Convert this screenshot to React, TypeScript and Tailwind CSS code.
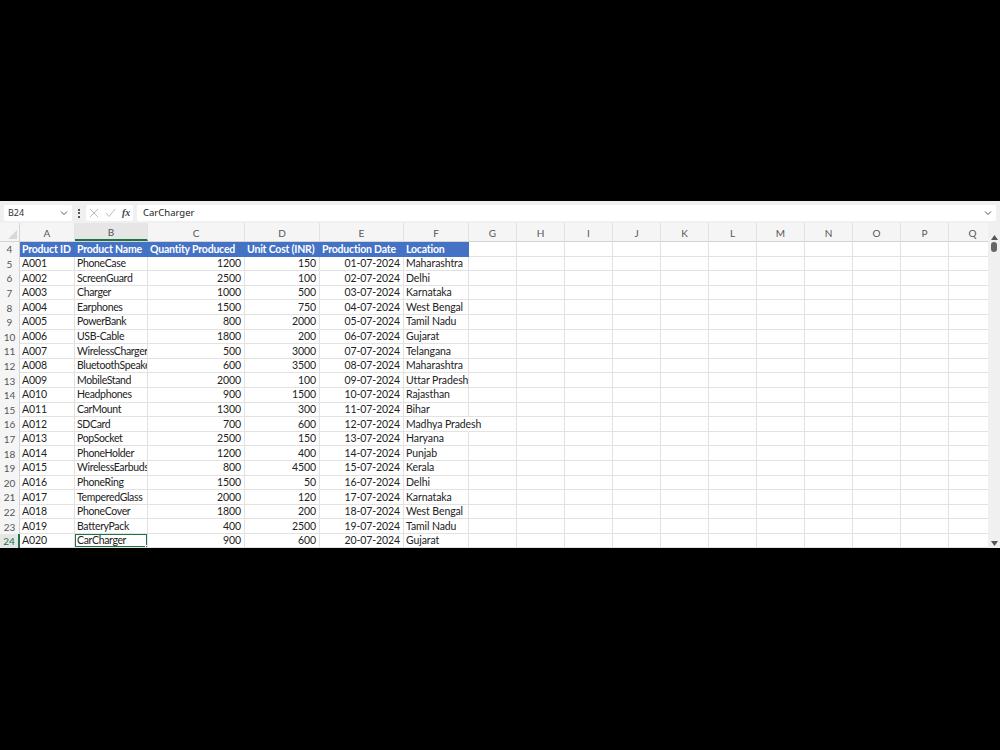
import React from 'react';

const cols = [
    { key: 'A', w: 55 },
    { key: 'B', w: 73 },
    { key: 'C', w: 97 },
    { key: 'D', w: 75 },
    { key: 'E', w: 84 },
    { key: 'F', w: 65 },
    { key: 'G', w: 48 },
    { key: 'H', w: 48 },
    { key: 'I', w: 48 },
    { key: 'J', w: 48 },
    { key: 'K', w: 48 },
    { key: 'L', w: 48 },
    { key: 'M', w: 48 },
    { key: 'N', w: 48 },
    { key: 'O', w: 48 },
    { key: 'P', w: 48 },
    { key: 'Q', w: 48 },
];

const headers = ['Product ID', 'Product Name', 'Quantity Produced', 'Unit Cost (INR)', 'Production Date', 'Location'];

const rows: [string, string, number, number, string, string][] = [
    ['A001', 'PhoneCase', 1200, 150, '01-07-2024', 'Maharashtra'],
    ['A002', 'ScreenGuard', 2500, 100, '02-07-2024', 'Delhi'],
    ['A003', 'Charger', 1000, 500, '03-07-2024', 'Karnataka'],
    ['A004', 'Earphones', 1500, 750, '04-07-2024', 'West Bengal'],
    ['A005', 'PowerBank', 800, 2000, '05-07-2024', 'Tamil Nadu'],
    ['A006', 'USB-Cable', 1800, 200, '06-07-2024', 'Gujarat'],
    ['A007', 'WirelessCharger', 500, 3000, '07-07-2024', 'Telangana'],
    ['A008', 'BluetoothSpeaker', 600, 3500, '08-07-2024', 'Maharashtra'],
    ['A009', 'MobileStand', 2000, 100, '09-07-2024', 'Uttar Pradesh'],
    ['A010', 'Headphones', 900, 1500, '10-07-2024', 'Rajasthan'],
    ['A011', 'CarMount', 1300, 300, '11-07-2024', 'Bihar'],
    ['A012', 'SDCard', 700, 600, '12-07-2024', 'Madhya Pradesh'],
    ['A013', 'PopSocket', 2500, 150, '13-07-2024', 'Haryana'],
    ['A014', 'PhoneHolder', 1200, 400, '14-07-2024', 'Punjab'],
    ['A015', 'WirelessEarbuds', 800, 4500, '15-07-2024', 'Kerala'],
    ['A016', 'PhoneRing', 1500, 50, '16-07-2024', 'Delhi'],
    ['A017', 'TemperedGlass', 2000, 120, '17-07-2024', 'Karnataka'],
    ['A018', 'PhoneCover', 1800, 200, '18-07-2024', 'West Bengal'],
    ['A019', 'BatteryPack', 400, 2500, '19-07-2024', 'Tamil Nadu'],
    ['A020', 'CarCharger', 900, 600, '20-07-2024', 'Gujarat'],
];

const cellFont = { fontFamily: 'Lato, "Open Sans", sans-serif' };

function Chevron() {
    return (
        <svg width="8" height="8" viewBox="0 0 8 8"><path d="M1 2.5 L4 5.5 L7 2.5" fill="none" stroke="#555" strokeWidth="1" /></svg>
    );
}

function Toolbar() {
    return (
        <div className="h-[22px] bg-[#f0f0f0] flex items-center pl-[4px] pr-[4px] gap-[4px] pt-[2px]">
            <div className="w-[68px] h-[16px] bg-white rounded-[2px] flex items-center justify-between px-[4px] text-[9px] text-[#333]" style={{ fontFamily: '"Noto Sans", sans-serif' }}>
                <span>B24</span>
                <Chevron />
            </div>
            <div className="w-[6px] flex flex-col items-center gap-[1.5px]">
                <div className="w-[2px] h-[2px] bg-[#555]" />
                <div className="w-[2px] h-[2px] bg-[#555]" />
                <div className="w-[2px] h-[2px] bg-[#555]" />
            </div>
            <div className="w-[47px] h-[16px] bg-white rounded-[2px] flex items-center gap-[6px] pl-[3px]">
                <svg width="10" height="10" viewBox="0 0 10 10"><path d="M1 1 L9 9 M9 1 L1 9" stroke="#bbb" strokeWidth="1" /></svg>
                <svg width="11" height="10" viewBox="0 0 11 10"><path d="M1 5 L4 8.5 L10 1" fill="none" stroke="#bbb" strokeWidth="1" /></svg>
                <span className="text-[10px] italic text-[#444] font-bold leading-none" style={{ fontFamily: '"Liberation Serif", serif' }}>fx</span>
            </div>
            <div className="flex-1 h-[16px] bg-white rounded-[2px] flex items-center justify-between pl-[6px] pr-[4px] text-[9.5px] text-[#222]" style={{ fontFamily: '"Noto Sans", sans-serif' }}>
                <span>CarCharger</span>
                <Chevron />
            </div>
        </div>
    );
}

function ColumnHeader() {
    return (
        <div className="flex h-[19px] bg-[#f5f5f5] border-b border-[#d4d4d4]">
            <div className="w-[20px] shrink-0 relative border-r border-[#d4d4d4]">
                <svg className="absolute right-[2px] bottom-[2px]" width="9" height="9" viewBox="0 0 9 9"><path d="M9 0 L9 9 L0 9 Z" fill="#d8d8d8" /></svg>
            </div>
            {cols.map((c) => (
                <div
                    key={c.key}
                    className={`shrink-0 flex items-center justify-center pt-[2px] text-[10px] text-[#555] border-r border-[#e2e2e2] ${c.key === 'B' ? 'bg-[#e6e6e6] border-b-2 border-b-[#217346]' : ''}`}
                    style={{ width: c.w, ...cellFont }}
                >
                    {c.key}
                </div>
            ))}
        </div>
    );
}

function RowHeader({ n, active }: { n: number; active?: boolean }) {
    return (
        <div
            className={`w-[20px] shrink-0 flex items-center justify-center pt-[1px] text-[10px] border-r ${active ? 'text-[#217346] bg-[#e6e6e6] border-r-2 border-[#217346]' : 'text-[#555] bg-[#f5f5f5] border-[#d4d4d4]'}`}
            style={cellFont}
        >
            {n}
        </div>
    );
}

export default function App() {
    return (
        <div className="w-[1000px] h-[750px] bg-black flex flex-col">
            <div className="h-[201px] shrink-0" />
            <div className="h-[347px] shrink-0 bg-white flex flex-col overflow-hidden">
                <Toolbar />
                <div className="flex-1 flex overflow-hidden">
                    <div className="flex-1 flex flex-col overflow-hidden">
                        <ColumnHeader />
                        {/* header row 4 */}
                        <div className="flex h-[14.6px] shrink-0">
                            <RowHeader n={4} />
                            {cols.map((c, i) => (
                                <div
                                    key={c.key}
                                    className={`shrink-0 flex items-center pt-[1px] text-[10.5px] tracking-[-0.2px] whitespace-nowrap overflow-hidden pl-[2px] ${i < 6 ? 'bg-[#4472c4] text-white font-bold' : 'border-r border-b border-[#e2e2e2]'}`}
                                    style={{ width: c.w, ...cellFont }}
                                >
                                    {i < 6 ? headers[i] : ''}
                                </div>
                            ))}
                        </div>
                        {rows.map((r, ri) => {
                            const rowNum = ri + 5;
                            const active = rowNum === 24;
                            return (
                                <div key={rowNum} className="flex h-[14.6px] shrink-0">
                                    <RowHeader n={rowNum} active={active} />
                                    {cols.map((c, i) => {
                                        const val = i < 6 ? r[i] : '';
                                        const right = i === 2 || i === 3 || i === 4;
                                        const overflowF = i === 5 && String(val).length > 13;
                                        const selected = active && i === 1;
                                        return (
                                            <div
                                                key={c.key}
                                                className={`shrink-0 relative flex items-center pt-[1px] text-[10.5px] text-[#222] whitespace-nowrap border-b border-[#e2e2e2] ${i === 1 ? 'tracking-[-0.35px]' : 'tracking-[-0.1px]'} ${overflowF ? 'overflow-visible z-10 border-r border-r-transparent' : 'overflow-hidden border-r'} ${right ? 'justify-end pr-[3px]' : 'pl-[2px]'}`}
                                                style={{ width: c.w, ...cellFont }}
                                            >
                                                {String(val)}
                                                {selected && (
                                                    <div className="absolute -left-[1px] -top-[1px] -right-[1px] -bottom-[1px] border-2 border-[#217346]">
                                                        <div className="absolute -right-[3px] -bottom-[3px] w-[4px] h-[4px] bg-[#217346] border border-white" />
                                                    </div>
                                                )}
                                            </div>
                                        );
                                    })}
                                </div>
                            );
                        })}
                    </div>
                    <div className="w-[12px] shrink-0 bg-[#f0f0f0] flex flex-col items-center pt-[12px] pb-[2px]">
                        <svg width="7" height="5" viewBox="0 0 7 5"><path d="M3.5 0 L7 5 L0 5 Z" fill="#555" /></svg>
                        <div className="w-[6px] h-[10px] bg-[#666] rounded-[3px] mt-[2px]" />
                        <div className="flex-1" />
                        <svg width="7" height="5" viewBox="0 0 7 5"><path d="M0 0 L7 0 L3.5 5 Z" fill="#555" /></svg>
                    </div>
                </div>
            </div>
        </div>
    );
}
